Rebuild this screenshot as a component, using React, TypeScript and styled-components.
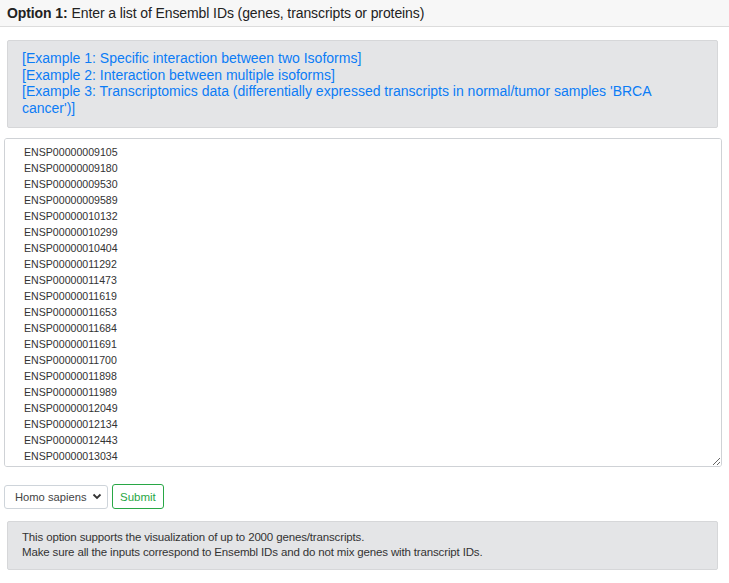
import { FC } from "react";
import styled, { createGlobalStyle } from "styled-components";

const GlobalStyle = createGlobalStyle`
  body {
    margin: 0;
    background: #ffffff;
    font-family: "Liberation Sans", Arial, sans-serif;
    color: #212529;
  }
`;

const Page = styled.div`
  display: flex;
  flex-direction: column;
  width: 729px;
`;

const Header = styled.div`
  height: 26px;
  display: flex;
  align-items: center;
  padding-left: 7px;
  background: #f7f7f7;
  border-bottom: 1px solid #dcdcdc;
  font-size: 14px;
  letter-spacing: -0.1px;
  color: #222;
`;

const Bold = styled.b`
  font-weight: 700;
  margin-right: 4px;
`;

const Body = styled.div`
  display: flex;
  flex-direction: column;
  padding: 13px 7px 0 4px;
`;

const GreyBox = styled.div<{ $pad: string; $top?: number }>`
  margin: ${(p) => p.$top ?? 0}px 4px 0 3px;
  padding: ${(p) => p.$pad};
  background: #e4e5e7;
  border: 1px solid #d6d7d9;
  border-radius: 2px;
`;

const ExampleLink = styled.a`
  display: block;
  color: #0b7cf6;
  font-size: 14px;
  line-height: 16.5px;
  text-decoration: none;
  cursor: pointer;
`;

const IdArea = styled.textarea`
  margin-top: 10px;
  height: 329px;
  box-sizing: border-box;
  padding: 5px 19px;
  border: 1px solid #cfd2d6;
  border-radius: 3px;
  font-family: "Liberation Sans", Arial, sans-serif;
  font-size: 10.6px;
  line-height: 16px;
  color: #333;
  resize: vertical;
  outline: none;
`;

const FormRow = styled.div`
  display: flex;
  align-items: center;
  gap: 4px;
  margin-top: 17px;
`;

const SpeciesSelect = styled.div`
  width: 104px;
  height: 24px;
  box-sizing: border-box;
  display: flex;
  align-items: center;
  justify-content: space-between;
  padding: 0 5px 0 10px;
  border: 1px solid #ced4da;
  border-radius: 3px;
  font-size: 11.2px;
  color: #444;
`;

const SubmitButton = styled.button`
  height: 25px;
  box-sizing: border-box;
  padding: 0 7px;
  background: #fff;
  border: 1px solid #28a745;
  border-radius: 3px;
  color: #28a745;
  font-family: "Liberation Sans", Arial, sans-serif;
  font-size: 11.5px;
`;

const Note = styled.div`
  font-size: 11.5px;
  line-height: 14.5px;
  letter-spacing: -0.15px;
  color: #333;
`;

const ids = [
  "ENSP00000009105",
  "ENSP00000009180",
  "ENSP00000009530",
  "ENSP00000009589",
  "ENSP00000010132",
  "ENSP00000010299",
  "ENSP00000010404",
  "ENSP00000011292",
  "ENSP00000011473",
  "ENSP00000011619",
  "ENSP00000011653",
  "ENSP00000011684",
  "ENSP00000011691",
  "ENSP00000011700",
  "ENSP00000011898",
  "ENSP00000011989",
  "ENSP00000012049",
  "ENSP00000012134",
  "ENSP00000012443",
  "ENSP00000013034",
  "ENSP00000013070",
  "ENSP00000013125",
];

const Chevron: FC = () => (
  <svg width="10" height="7" viewBox="0 0 10 7">
    <path d="M1.5 1.5 L5 5 L8.5 1.5" fill="none" stroke="#333" strokeWidth="1.8" />
  </svg>
);

const App: FC = () => {
  return (
    <Page>
      <GlobalStyle />
      <Header>
        <Bold>Option 1:</Bold> Enter a list of Ensembl IDs (genes, transcripts or proteins)
      </Header>
      <Body>
        <GreyBox $pad="9px 14px 11px">
          <ExampleLink>[Example 1: Specific interaction between two Isoforms]</ExampleLink>
          <ExampleLink>[Example 2: Interaction between multiple isoforms]</ExampleLink>
          <ExampleLink>
            [Example 3: Transcriptomics data (differentially expressed transcripts in normal/tumor samples 'BRCA
            cancer')]
          </ExampleLink>
        </GreyBox>
        <IdArea defaultValue={ids.join("\n")} spellCheck={false} />
        <FormRow>
          <SpeciesSelect>
            Homo sapiens
            <Chevron />
          </SpeciesSelect>
          <SubmitButton>Submit</SubmitButton>
        </FormRow>
        <GreyBox $pad="8px 14px 10px" $top={12}>
          <Note>This option supports the visualization of up to 2000 genes/transcripts.</Note>
          <Note>Make sure all the inputs correspond to Ensembl IDs and do not mix genes with transcript IDs.</Note>
        </GreyBox>
      </Body>
    </Page>
  );
};

export default App;
